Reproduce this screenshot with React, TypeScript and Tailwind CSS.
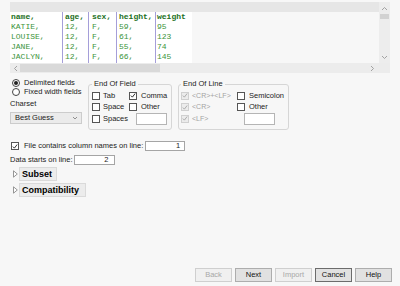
import React from "react";

const rows = [
  ["KATIE,", "12,", "F,", "59,", "95"],
  ["LOUISE,", "12,", "F,", "61,", "123"],
  ["JANE,", "12,", "F,", "55,", "74"],
  ["JACLYN,", "12,", "F,", "66,", "145"],
];
const head = ["name,", "age,", "sex,", "height,", "weight"];
const cols = [
  "w-[53px] pl-[1px] border-r border-[#a59ed9]",
  "w-[26px] pl-[2px] border-r border-[#a59ed9]",
  "w-[28px] pl-[3px] border-r border-[#a59ed9]",
  "w-[39px] pl-[2px] border-r border-[#a59ed9]",
  "w-[36px] pl-[1px]",
];

function Check({ on, off }: { on?: boolean; off?: boolean }) {
  return (
    <span
      className={
        "w-[8px] h-[8px] border flex items-center justify-center shrink-0 " +
        (off ? "border-[#d0d0d0] bg-[#ececec]" : "border-[#555] bg-white")
      }
    >
      {on && (
        <svg width="7" height="7" viewBox="0 0 7 7">
          <path d="M1 3.6 L2.8 5.4 L6 1.2" fill="none" stroke={off ? "#a8a8a8" : "#222"} strokeWidth="1.1" />
        </svg>
      )}
    </span>
  );
}

function Radio({ on }: { on?: boolean }) {
  return (
    <span className="w-[8px] h-[8px] rounded-full border border-[#444] bg-white flex items-center justify-center shrink-0">
      {on && <span className="w-[4px] h-[4px] rounded-full bg-[#222]" />}
    </span>
  );
}

function Tri() {
  return (
    <svg width="5" height="8" viewBox="0 0 5 8" className="shrink-0">
      <path d="M0.5 0.8 L4.3 4 L0.5 7.2 Z" fill="#fff" stroke="#8a8a8a" strokeWidth="0.9" />
    </svg>
  );
}

function Btn({ label, dis, def }: { label: string; dis?: boolean; def?: boolean }) {
  return (
    <div
      className={
        "w-[37px] h-[14px] flex items-center justify-center border " +
        (dis
          ? "border-[#cfcfcf] bg-[#f0f0f0] text-[#a8a8a8]"
          : def
          ? "border-[#6c6c6c] bg-[#e1e1e1] text-[#111]"
          : "border-[#adadad] bg-[#e1e1e1] text-[#111]")
      }
    >
      {label}
    </div>
  );
}

export default function App() {
  return (
    <div className="w-[400px] h-[286px] bg-[#f7f7f7] flex flex-col font-['Liberation_Sans',sans-serif] text-[7.5px] leading-[10px] text-[#222] overflow-hidden whitespace-nowrap">
      {/* preview */}
      <div className="mt-[2px] ml-[10px] w-[380px] h-[71px] flex flex-col">
        <div className="flex h-[61px]">
          <div className="flex-1 flex flex-col">
            <div className="h-[10px] bg-[#e6e6e6]" />
            <div className="h-[51px] flex font-['Liberation_Mono',monospace] text-[8px] leading-[10px] text-[#3b943b]">
              {cols.map((c, i) => (
                <div key={i} className={"bg-white " + c}>
                  <div className="font-bold text-[#237023]">{head[i]}</div>
                  {rows.map((r, j) => (
                    <div key={j}>{r[i]}</div>
                  ))}
                </div>
              ))}
            </div>
          </div>
          <div className="w-[11px] bg-[#ededed] flex flex-col items-center">
            <svg width="7" height="5" viewBox="0 0 7 5" className="mt-[4px]">
              <path d="M1 4 L3.5 1.5 L6 4" fill="none" stroke="#9a9a9a" strokeWidth="0.9" />
            </svg>
            <div className="w-[9px] h-[5px] bg-[#d2d2d2] mt-[3px]" />
            <svg width="7" height="5" viewBox="0 0 7 5" className="mt-auto mb-[3px]">
              <path d="M1 1 L3.5 3.5 L6 1" fill="none" stroke="#9a9a9a" strokeWidth="0.9" />
            </svg>
          </div>
        </div>
        <div className="h-[10px] bg-[#ececec] flex items-center">
          <svg width="5" height="7" viewBox="0 0 5 7" className="ml-[3px]">
            <path d="M4 1 L1.5 3.5 L4 6" fill="none" stroke="#9a9a9a" strokeWidth="0.9" />
          </svg>
          <div className="ml-[2px] w-[140px] h-[8px] bg-[#d9d9d9]" />
          <svg width="5" height="7" viewBox="0 0 5 7" className="ml-auto mr-[15px]">
            <path d="M1 1 L3.5 3.5 L1 6" fill="none" stroke="#9a9a9a" strokeWidth="0.9" />
          </svg>
        </div>
      </div>

      {/* options */}
      <div className="flex items-start mt-[5px]">
        <div className="ml-[10px] w-[78px] flex flex-col">
          <div className="h-[9px] flex items-center gap-[4px] pl-[2px]">
            <Radio on />
            <span>Delimited fields</span>
          </div>
          <div className="h-[9px] flex items-center gap-[4px] pl-[2px]">
            <Radio />
            <span>Fixed width fields</span>
          </div>
          <div className="mt-[3px] h-[10px] leading-[10px]">Charset</div>
          <div className="mt-[3px] h-[12px] w-[72px] border border-[#cccccc] bg-[#ebebeb] flex items-center pl-[4px] pr-[3px]">
            <span>Best Guess</span>
            <svg width="6" height="4" viewBox="0 0 6 4" className="ml-auto">
              <path d="M1 1 L3 3 L5 1" fill="none" stroke="#777" strokeWidth="0.8" />
            </svg>
          </div>
        </div>

        <fieldset className="mt-[1px] w-[84px] h-[51px] border border-[#d6d6d6] rounded-[3px] px-[3px]">
          <legend className="px-[2px] leading-[10px]">End Of Field</legend>
          <div className="grid grid-cols-[37px_1fr] mt-[1px]">
            <div className="h-[11.5px] flex items-center gap-[3px]"><Check /><span>Tab</span></div>
            <div className="h-[11.5px] flex items-center gap-[4px]"><Check on /><span>Comma</span></div>
            <div className="h-[11.5px] flex items-center gap-[3px]"><Check /><span>Space</span></div>
            <div className="h-[11.5px] flex items-center gap-[4px]"><Check /><span>Other</span></div>
            <div className="h-[11.5px] flex items-center gap-[3px]"><Check /><span>Spaces</span></div>
            <div className="h-[11.5px] flex items-center">
              <div className="ml-[7px] w-[31px] h-[12px] border border-[#b5b5b5] bg-white" />
            </div>
          </div>
        </fieldset>

        <fieldset className="mt-[1px] ml-[6px] w-[111px] h-[51px] border border-[#d6d6d6] rounded-[3px] px-[2px]">
          <legend className="px-[2px] leading-[10px]">End Of Line</legend>
          <div className="grid grid-cols-[56px_1fr] mt-[1px]">
            <div className="h-[11.5px] flex items-center gap-[3px] text-[7px] text-[#a3a3a3]"><Check on off /><span>&lt;CR&gt;+&lt;LF&gt;</span></div>
            <div className="h-[11.5px] flex items-center gap-[4px]"><Check /><span>Semicolon</span></div>
            <div className="h-[11.5px] flex items-center gap-[3px] text-[7px] text-[#a3a3a3]"><Check on off /><span>&lt;CR&gt;</span></div>
            <div className="h-[11.5px] flex items-center gap-[4px]"><Check /><span>Other</span></div>
            <div className="h-[11.5px] flex items-center gap-[3px] text-[7px] text-[#a3a3a3]"><Check on off /><span>&lt;LF&gt;</span></div>
            <div className="h-[11.5px] flex items-center">
              <div className="ml-[7px] w-[31px] h-[12px] border border-[#b5b5b5] bg-white" />
            </div>
          </div>
        </fieldset>
      </div>

      {/* line settings */}
      <div className="mt-[11px] h-[10px] flex items-center pl-[11px]">
        <Check on />
        <span className="ml-[5px]">File contains column names on line:</span>
        <div className="ml-[2px] w-[40px] h-[10px] border border-[#a5a5a5] bg-white text-right pr-[4px] leading-[8px]">1</div>
      </div>
      <div className="mt-[4px] h-[10px] flex items-center pl-[10px]">
        <span>Data starts on line:</span>
        <div className="ml-[1px] w-[41px] h-[10px] border border-[#a5a5a5] bg-white text-right pr-[5px] leading-[8px]">2</div>
      </div>

      {/* outline nodes */}
      <div className="mt-[2px] ml-[13px] flex flex-col gap-[2px]">
        <div className="flex items-center gap-[1px]">
          <Tri />
          <div className="h-[14px] px-[2px] w-[38px] bg-[#ececec] border border-[#dadada] font-bold text-[9px] leading-[12px] text-black">Subset</div>
        </div>
        <div className="flex items-center gap-[1px]">
          <Tri />
          <div className="h-[14px] px-[2px] w-[67px] bg-[#ececec] border border-[#dadada] font-bold text-[9px] leading-[12px] text-black">Compatibility</div>
        </div>
      </div>

      {/* buttons */}
      <div className="mt-auto mb-[4px] flex justify-end gap-[3px] pr-[8px]">
        <Btn label="Back" dis />
        <Btn label="Next" />
        <Btn label="Import" dis />
        <Btn label="Cancel" def />
        <Btn label="Help" />
      </div>
    </div>
  );
}
